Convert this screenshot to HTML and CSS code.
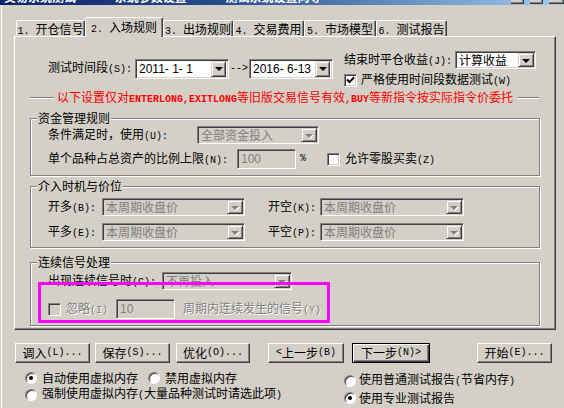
FILE: index.html
```html
<!DOCTYPE html>
<html lang="zh-CN">
<head>
<meta charset="UTF-8">
<title>测试参数设置</title>
<link rel="stylesheet" href="styles.css">
</head>
<body>
<div class="titlebar">
  <div class="title-text">交易系统测试　　　 系统参数设置　　　 测试系统设置向导</div>
  <div class="title-btns"><span></span><span></span><span class="last"></span></div>
</div>

<div class="tabs">
  <div class="tab t1"><span class="k">1. </span>开仓信号</div>
  <div class="tab t2 active"><span class="k">2. </span>入场规则</div>
  <div class="tab t3"><span class="k">3. </span>出场规则</div>
  <div class="tab t4"><span class="k">4. </span>交易费用</div>
  <div class="tab t5"><span class="k">5. </span>市场模型</div>
  <div class="tab t6"><span class="k">6. </span>测试报告</div>
</div>

<div class="panel">
  <div class="row-top">
    <div class="period">
      <span class="lbl-period">测试时间段<span class="k">(S):</span></span>
      <div class="field date d1"><span class="val">2011- 1- 1</span><span class="drop"></span></div>
      <span class="arrow k">--&gt;</span>
      <div class="field date d2"><span class="val">2016- 6-13</span><span class="drop"></span></div>
    </div>
    <div class="right-col">
      <div class="line">
        <span class="lbl-close">结束时平仓收益<span class="k">(J):</span></span>
        <div class="field combo w-calc"><span class="val">计算收益</span><span class="drop"></span></div>
      </div>
      <div class="check-line">
        <span class="chk"><svg width="9" height="9" viewBox="0 0 9 9"><path d="M1 3.5 L3.5 6 L8 1.5" fill="none" stroke="#000" stroke-width="2"/></svg></span>
        <span>严格使用时间段数据测试<span class="k">(W)</span></span>
      </div>
    </div>
  </div>

  <div class="notice">
    <span class="rule short"></span>
    <span class="notice-text">以下设置仅对<span class="en">ENTERLONG,EXITLONG</span>等旧版交易信号有效<span class="en">,BUY</span>等新指令按实际指令价委托</span>
    <span class="rule"></span>
  </div>

  <!-- 资金管理规则 -->
  <div class="group g1">
    <div class="gtitle">资金管理规则</div>
    <div class="grow r1">
      <span class="lbl-use">条件满足时，使用<span class="k">(U):</span></span>
      <div class="field combo off w-fund"><span class="val">全部资金投入</span><span class="drop"></span></div>
    </div>
    <div class="grow r2">
      <span class="lbl-ratio">单个品种占总资产的比例上限<span class="k">(N):</span></span>
      <div class="field off w-ratio"><span class="val num">100</span></div>
      <span class="pct k">%</span>
      <span class="chk odd"></span>
      <span class="chk-text">允许零股买卖<span class="k">(Z)</span></span>
    </div>
  </div>

  <!-- 介入时机与价位 -->
  <div class="group g2">
    <div class="gtitle">介入时机与价位</div>
    <div class="grow r1">
      <span class="lbl-side">开多<span class="k">(B):</span></span>
      <div class="field combo off w-price"><span class="val">本周期收盘价</span><span class="drop"></span></div>
      <span class="lbl-side second">开空<span class="k">(K):</span></span>
      <div class="field combo off w-price2"><span class="val">本周期收盘价</span><span class="drop"></span></div>
    </div>
    <div class="grow r2">
      <span class="lbl-side">平多<span class="k">(E):</span></span>
      <div class="field combo off w-price"><span class="val">本周期收盘价</span><span class="drop"></span></div>
      <span class="lbl-side second">平空<span class="k">(P):</span></span>
      <div class="field combo off w-price2"><span class="val">本周期收盘价</span><span class="drop"></span></div>
    </div>
  </div>

  <!-- 连续信号处理 -->
  <div class="group g3">
    <div class="gtitle">连续信号处理</div>
    <div class="grow r1">
      <span class="lbl-cont">出现连续信号时<span class="k">(C):</span></span>
      <div class="field combo off w-cont"><span class="val">不再投入</span><span class="drop"></span></div>
    </div>
    <div class="grow r2">
      <span class="chk off"></span>
      <span class="dim lbl-ignore">忽略<span class="k">(I)</span></span>
      <div class="field off w-count"><span class="val num">10</span></div>
      <span class="dim lbl-period2">周期内连续发生的信号<span class="k">(Y)</span></span>
    </div>
  </div>
</div>

<div class="buttons">
  <div class="btn">调入<span class="k">(L)...</span></div>
  <div class="btn b2">保存<span class="k">(S)...</span></div>
  <div class="btn b3">优化<span class="k">(O)...</span></div>
  <div class="btn b4"><span class="k">&lt;</span>上一步<span class="k">(B)</span></div>
  <div class="btn b5 default">下一步<span class="k">(N)&gt;</span></div>
  <div class="btn b6">开始<span class="k">(E)...</span></div>
</div>

<div class="options">
  <div class="opt-left">
    <div class="radio-row">
      <span class="radio on"></span><span>自动使用虚拟内存</span>
      <span class="radio gap"></span><span>禁用虚拟内存</span>
    </div>
    <div class="radio-row">
      <span class="radio"></span><span>强制使用虚拟内存<span class="k">(</span>大量品种测试时请选此项<span class="k">)</span></span>
    </div>
  </div>
  <div class="opt-right">
    <div class="radio-row">
      <span class="radio"></span><span>使用普通测试报告<span class="k">(</span>节省内存<span class="k">)</span></span>
    </div>
    <div class="radio-row">
      <span class="radio on"></span><span>使用专业测试报告</span>
    </div>
  </div>
</div>

<!-- annotation frame -->
<div class="highlight"></div>
</body>
</html>
```

FILE: styles.css
```css
body {
  margin: 0;
  width: 564px;
  height: 408px;
  overflow: hidden;
  position: relative;
  background: #d4d0c8;
  color: #000;
  font-family: "Noto Sans CJK SC", sans-serif;
  font-size: 12px;
  line-height: 14px;
  box-shadow: inset 1px 0 0 #d4d0c8, inset 2px 0 0 #fff;
}

/* Latin parts of labels: narrow 6px cells like the dialog font */
.k {
  font-family: "Liberation Mono", monospace;
  font-size: 10px;
}

/* Title bar (cut off at the top) */
.titlebar {
  height: 5px;
  overflow: hidden;
  display: flex;
  justify-content: space-between;
  background: linear-gradient(90deg, #0a246a, #2a4c8c 40%, #a6caf0);
}

.title-text {
  margin-top: -10px;
  padding-left: 4px;
  color: #fff;
  font-weight: bold;
  white-space: nowrap;
}

.title-btns {
  display: flex;
}

.title-btns span {
  width: 13px;
  height: 14px;
  margin-top: -10px;
  margin-right: 6px;
  background: #d4d0c8;
  box-shadow: inset -1px -1px 0 #404040, inset -2px -2px 0 #808080;
}

.title-btns span.last {
  width: 15px;
  margin-right: 0;
}

/* Tabs */
.tabs {
  display: flex;
  align-items: flex-end;
  height: 19px;
  margin: 12px 0 0 16px;
}

.tab {
  box-sizing: border-box;
  height: 16px;
  border: 1px solid;
  border-bottom: none;
  border-color: #fff #404040 transparent #fff;
  border-radius: 2px 2px 0 0;
  box-shadow: inset -1px 0 0 #808080;
  text-align: center;
  line-height: 15px;
  white-space: nowrap;
}

.tab.active {
  height: 20px;
  margin-bottom: -1px;
  position: relative;
  z-index: 1;
  background: #d4d0c8;
  line-height: 17px;
}

.t1 { width: 69px; }
.t2 { width: 78px; }
.t3 { width: 70px; }
.t4 { width: 71px; }
.t5 { width: 72px; }
.t6 { width: 71px; }

/* Tab panel */
.panel {
  box-sizing: border-box;
  width: 542px;
  margin-left: 14px;
  border: 1px solid;
  border-color: #fff #404040 #404040 #fff;
  box-shadow: inset -1px -1px 0 #808080;
  padding-bottom: 3px;
}

.row-top {
  display: flex;
  height: 35px;
  padding: 14px 0 0 33px;
}

.period {
  display: flex;
  align-items: center;
}

.lbl-period { width: 87px; }

.arrow {
  width: 20px;
  text-align: center;
}

.right-col {
  margin-left: 11px;
}

.right-col .line {
  display: flex;
  align-items: center;
  height: 18px;
}

.lbl-close { width: 111px; }

.check-line {
  display: flex;
  align-items: center;
  margin-top: 5px;
  height: 13px;
}

.check-line .chk {
  margin-right: 4px;
}

/* Sunken fields and combo boxes */
.field {
  box-sizing: border-box;
  display: flex;
  align-items: center;
  height: 18px;
  padding: 1px;
  background: #fff;
  border: 1px solid;
  border-color: #808080 #fff #fff #808080;
  box-shadow: inset 1px 1px 0 #404040, inset -1px -1px 0 #d4d0c8;
}

.field .val {
  flex: 1;
  padding-left: 2px;
  white-space: nowrap;
}

.field .num {
  font-family: "Liberation Sans", sans-serif;
  font-size: 12px;
}

.field.off {
  background: #d4d0c8;
  color: #808080;
}

.drop {
  box-sizing: border-box;
  width: 16px;
  align-self: stretch;
  display: flex;
  align-items: center;
  justify-content: center;
  background: #d4d0c8;
  border: 1px solid;
  border-color: #d4d0c8 #404040 #404040 #d4d0c8;
  box-shadow: inset 1px 1px 0 #fff, inset -1px -1px 0 #808080;
}

.drop::after {
  content: "";
  border-top: 4px solid #000;
  border-left: 4px solid transparent;
  border-right: 4px solid transparent;
  margin-top: 1px;
}

.off .drop::after {
  border-top-color: #808080;
  filter: drop-shadow(1px 1px 0 #fff);
}

.date {
  height: 20px;
  font-family: "Liberation Sans", sans-serif;
  font-size: 12px;
}

.date .drop {
  width: 15px;
  margin-right: 1px;
}

.d1 { width: 94px; }
.d2 { width: 84px; }
.w-calc { width: 81px; }

/* Red notice line */
.notice {
  display: flex;
  align-items: center;
  height: 14px;
  margin-top: 5px;
  padding: 0 16px 0 15px;
}

.rule {
  flex: 1;
  height: 0;
  margin-left: 5px;
  border-top: 1px solid #808080;
  border-bottom: 1px solid #fff;
}

.rule.short {
  flex: none;
  width: 24px;
  margin: 0 3px 0 0;
}

.notice-text {
  color: #ff0000;
  white-space: nowrap;
}

.notice-text .en {
  font-family: "Liberation Mono", monospace;
  font-size: 10px;
  font-weight: bold;
}

/* Group boxes */
.group {
  margin: 13px 15px 0 15px;
  padding-bottom: 6px;
  border: 1px solid #808080;
  box-shadow: inset 1px 1px 0 #fff, 1px 1px 0 #fff;
}

.g2 { margin-top: 10px; }
.g3 { margin-top: 14px; }

.gtitle {
  display: table;
  margin: -8px 0 0 6px;
  padding: 0 1px;
  background: #d4d0c8;
}

.grow {
  display: flex;
  align-items: center;
  height: 18px;
  padding-left: 17px;
}

.g1 .r1 { margin-top: 1px; }
.g1 .r2 { margin-top: 5px; height: 20px; }
.g2 .r1 { margin-top: 5px; }
.g2 .r2 { margin-top: 7px; }
.g3 .r1 { margin-top: 3px; }
.g3 .r2 { margin-top: 9px; height: 20px; }

.lbl-use { width: 149px; }
.w-fund { width: 122px; }
.lbl-ratio { width: 189px; }
.w-ratio { width: 59px; height: 20px; }

.pct {
  margin-left: 4px;
  width: 8px;
}

.chk.odd { margin-left: 19px; }

.chk-text { margin-left: 5px; }

.lbl-side { width: 54px; }
.lbl-side.second {
  width: 52px;
  margin-left: 23px;
}

.w-price { width: 143px; }
.w-price2 { width: 144px; }

.lbl-cont { width: 114px; }
.w-cont { width: 130px; }

.lbl-ignore {
  width: 50px;
  margin-left: 5px;
}

.w-count { width: 59px; height: 20px; }

.lbl-period2 { margin-left: 8px; }

.dim {
  color: #808080;
  text-shadow: 1px 1px 0 #fff;
}

/* Checkbox */
.chk {
  box-sizing: border-box;
  width: 13px;
  height: 13px;
  flex: none;
  display: flex;
  align-items: center;
  justify-content: center;
  background: #fff;
  border: 1px solid;
  border-color: #808080 #fff #fff #808080;
  box-shadow: inset 1px 1px 0 #404040, inset -1px -1px 0 #d4d0c8;
}

.chk.off { background: #d4d0c8; }

/* Bottom buttons */
.buttons {
  display: flex;
  height: 20px;
  margin-top: 13px;
  padding-left: 15px;
}

.btn {
  box-sizing: border-box;
  width: 75px;
  height: 20px;
  display: flex;
  align-items: center;
  justify-content: center;
  border: 1px solid;
  border-color: #fff #404040 #404040 #fff;
  box-shadow: inset -1px -1px 0 #808080;
  white-space: nowrap;
}

.b2 { margin-left: 5px; }
.b3 { margin-left: 6px; width: 74px; }
.b4 { margin-left: 18px; width: 76px; }
.b5 { margin-left: 8px; width: 78px; }
.b6 { margin-left: 47px; }

.btn.default {
  border-color: #000;
  box-shadow: inset 1px 1px 0 #fff, inset -1px -1px 0 #404040, inset -2px -2px 0 #808080;
}

/* Radio options */
.options {
  display: flex;
}

.opt-left {
  width: 319px;
  margin-top: 6px;
  padding-left: 25px;
}

.opt-right {
  margin-top: 9px;
}

.radio-row {
  display: flex;
  align-items: center;
  height: 17px;
  white-space: nowrap;
}

.radio {
  box-sizing: border-box;
  width: 12px;
  height: 12px;
  flex: none;
  margin-right: 5px;
  display: flex;
  align-items: center;
  justify-content: center;
  border-radius: 50%;
  background: #fff;
  border: 1px solid;
  border-color: #808080 #fff #fff #808080;
  box-shadow: inset 1px 1px 0 #404040;
}

.opt-right .radio { margin-right: 3px; }

.radio.gap { margin-left: 10px; }

.radio.on::after {
  content: "";
  width: 4px;
  height: 4px;
  border-radius: 50%;
  background: #000;
}

/* Magenta annotation frame */
.highlight {
  position: absolute;
  left: 38px;
  top: 282px;
  width: 292px;
  height: 41px;
  box-sizing: border-box;
  border: 3px solid #ff00ff;
}
```
